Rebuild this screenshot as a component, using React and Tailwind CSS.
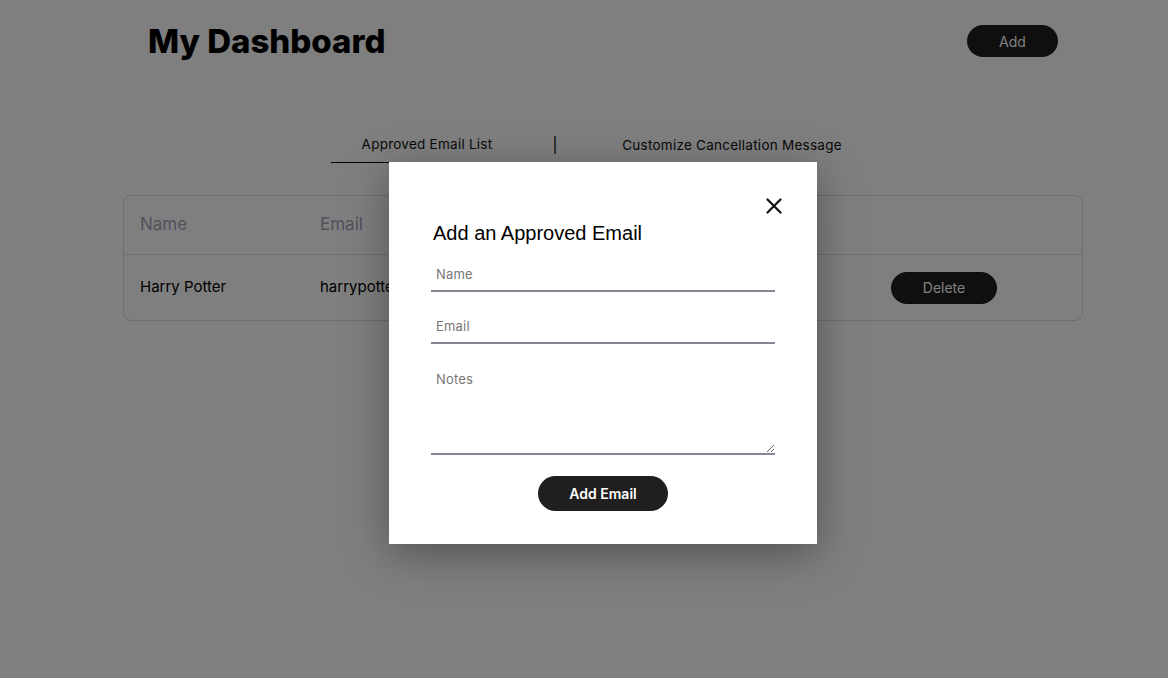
import React from "react";

const pop = { fontFamily: "Inter, 'Noto Sans', sans-serif" };

export default function App() {
  return (
    <div className="relative w-[1168px] h-[678px] overflow-hidden bg-white" style={pop}>
      {/* Header */}
      <div className="flex items-center justify-between pl-[148px] pr-[110px] pt-[22px]">
        <h1 className="text-[33px] leading-[38px] font-extrabold tracking-[0px] text-black">My Dashboard</h1>
        <button className="w-[91px] h-[32px] rounded-full bg-[#1e1e1e] text-white text-[14px]">Add</button>
      </div>

      {/* Tabs */}
      <div className="flex items-end pl-[331px] mt-[71px] text-[13.5px] tracking-[0.25px] text-[#111]">
        <div className="w-[192px] h-[32px] flex items-start justify-center border-b border-black pt-[3px]">Approved Email List</div>
        <div className="w-[64px] flex justify-center pb-[7px] text-[15px] text-black">|</div>
        <div className="w-[290px] h-[32px] flex items-start justify-center pt-[4px]">Customize Cancellation Message</div>
      </div>

      {/* Table */}
      <div className="ml-[123px] mt-[32px] w-[960px] border border-[#dcdce0] rounded-[8px]">
        <div className="flex items-center h-[59px] border-b border-[#dcdce0] text-[17px] text-[#a6a3b8]">
          <div className="w-[180px] pl-[16px] box-content">Name</div>
          <div className="w-[290px]">Email</div>
          <div className="flex-1"></div>
        </div>
        <div className="flex items-center h-[65px] text-[15px] text-black">
          <div className="w-[180px] pl-[16px] box-content">Harry Potter</div>
          <div className="w-[571px]">harrypotter@hogwarts.edu</div>
          <button className="w-[106px] h-[32px] rounded-full bg-[#1e1e1e] text-white text-[14px]">Delete</button>
        </div>
      </div>

      {/* Overlay */}
      <div className="absolute inset-0 bg-black/50"></div>

      {/* Modal */}
      <div className="absolute left-[389px] top-[162px] w-[428px] h-[382px] bg-white shadow-[0_10px_40px_rgba(0,0,0,0.35)] px-[42px] pt-[36px]">
        <div className="flex justify-end -mr-[7px]">
          <svg width="16" height="16" viewBox="0 0 16 16" fill="none" stroke="#111" strokeWidth="2.2" strokeLinecap="round">
            <path d="M1.5 1.5L14.5 14.5M14.5 1.5L1.5 14.5" />
          </svg>
        </div>
        <h2 className="mt-[7px] ml-[2px] text-[20px] leading-[24px] text-black" style={{ fontFamily: "'Liberation Sans', Arial, sans-serif" }}>
          Add an Approved Email
        </h2>
        <div className="mt-[13px] flex flex-col gap-[18px]">
          <input
            placeholder="Name"
            className="h-[34px] w-full border-b-2 border-[#8a8494] px-[5px] text-[13px] tracking-[0.2px] outline-none placeholder:text-[#777]"
          />
          <input
            placeholder="Email"
            className="h-[34px] w-full border-b-2 border-[#8a8494] px-[5px] text-[13px] tracking-[0.2px] outline-none placeholder:text-[#777]"
          />
          <textarea
            placeholder="Notes"
            className="h-[93px] w-full border-b-2 border-[#8a8494] px-[5px] pt-[8px] text-[13px] tracking-[0.2px] outline-none placeholder:text-[#777] block"
          />
        </div>
        <div className="flex justify-center mt-[21px]">
          <button className="w-[130px] h-[35px] rounded-full bg-[#201e1e] text-white text-[14px] font-semibold">Add Email</button>
        </div>
      </div>
    </div>
  );
}
